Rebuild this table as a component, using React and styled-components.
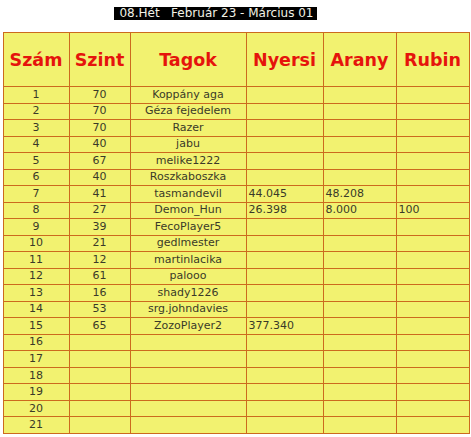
import React from "react";
import styled, { createGlobalStyle } from "styled-components";

const GlobalStyle = createGlobalStyle`
  html, body {
    margin: 0;
    padding: 0;
    background: #ffffff;
  }
  body {
    font-family: "DejaVu Sans", Verdana, sans-serif;
  }
`;

const Page = styled.div`
  width: 471px;
  height: 437px;
  display: flex;
  flex-direction: column;
  align-items: center;
  padding-top: 7px;
  box-sizing: border-box;
`;

const WeekLabel = styled.div`
  background: #000000;
  color: #f2f2e6;
  font-size: 12px;
  line-height: 13px;
  padding: 0 3px 0 5px;
  margin-right: 40px;
  white-space: pre;
`;

const Table = styled.table`
  margin-top: 12px;
  margin-left: 1px;
  border-collapse: collapse;
  border: 1px solid #c8944a;
  background: #f2f270;
  table-layout: fixed;
  width: 466px;
`;

const HeadCell = styled.th`
  height: 53px;
  padding: 0;
  border: 1px solid #cc6a1e;
  color: #e5140c;
  font-size: 17.5px;
  font-weight: bold;
  text-align: center;
`;

const Cell = styled.td`
  height: 15.52px;
  padding: 0 0 0 ${p => (p.$left ? "2px" : "0")};
  border: 1px solid #cc6a1e;
  color: #3a3a28;
  font-size: 11px;
  line-height: 14px;
  text-align: ${p => (p.$left ? "left" : "center")};
  white-space: nowrap;
  overflow: hidden;
`;

const columns = [
  { title: "Szám", width: 66 },
  { title: "Szint", width: 61 },
  { title: "Tagok", width: 116 },
  { title: "Nyersi", width: 77 },
  { title: "Arany", width: 73 },
  { title: "Rubin", width: 73 }
];

const members = [
  ["70", "Koppány aga"],
  ["70", "Géza fejedelem"],
  ["70", "Razer"],
  ["40", "jabu"],
  ["67", "melike1222"],
  ["40", "Roszkaboszka"],
  ["41", "tasmandevil", "44.045", "48.208"],
  ["27", "Demon_Hun", "26.398", "8.000", "100"],
  ["39", "FecoPlayer5"],
  ["21", "gedlmester"],
  ["12", "martinlacika"],
  ["61", "palooo"],
  ["16", "shady1226"],
  ["53", "srg.johndavies"],
  ["65", "ZozoPlayer2", "377.340"]
];

const rows = Array.from({ length: 21 }, (_, i) => members[i] || []);

export default function App() {
  return (
    <Page>
      <GlobalStyle />
      <WeekLabel>{"08.Hét   Február 23 - Március 01"}</WeekLabel>
      <Table>
        <colgroup>
          {columns.map(c => (
            <col key={c.title} style={{ width: c.width }} />
          ))}
        </colgroup>
        <thead>
          <tr>
            {columns.map(c => (
              <HeadCell key={c.title}>{c.title}</HeadCell>
            ))}
          </tr>
        </thead>
        <tbody>
          {rows.map((r, i) => (
            <tr key={i}>
              <Cell>{i + 1}</Cell>
              <Cell>{r[0]}</Cell>
              <Cell>{r[1]}</Cell>
              <Cell $left>{r[2]}</Cell>
              <Cell $left>{r[3]}</Cell>
              <Cell $left>{r[4]}</Cell>
            </tr>
          ))}
        </tbody>
      </Table>
    </Page>
  );
}
